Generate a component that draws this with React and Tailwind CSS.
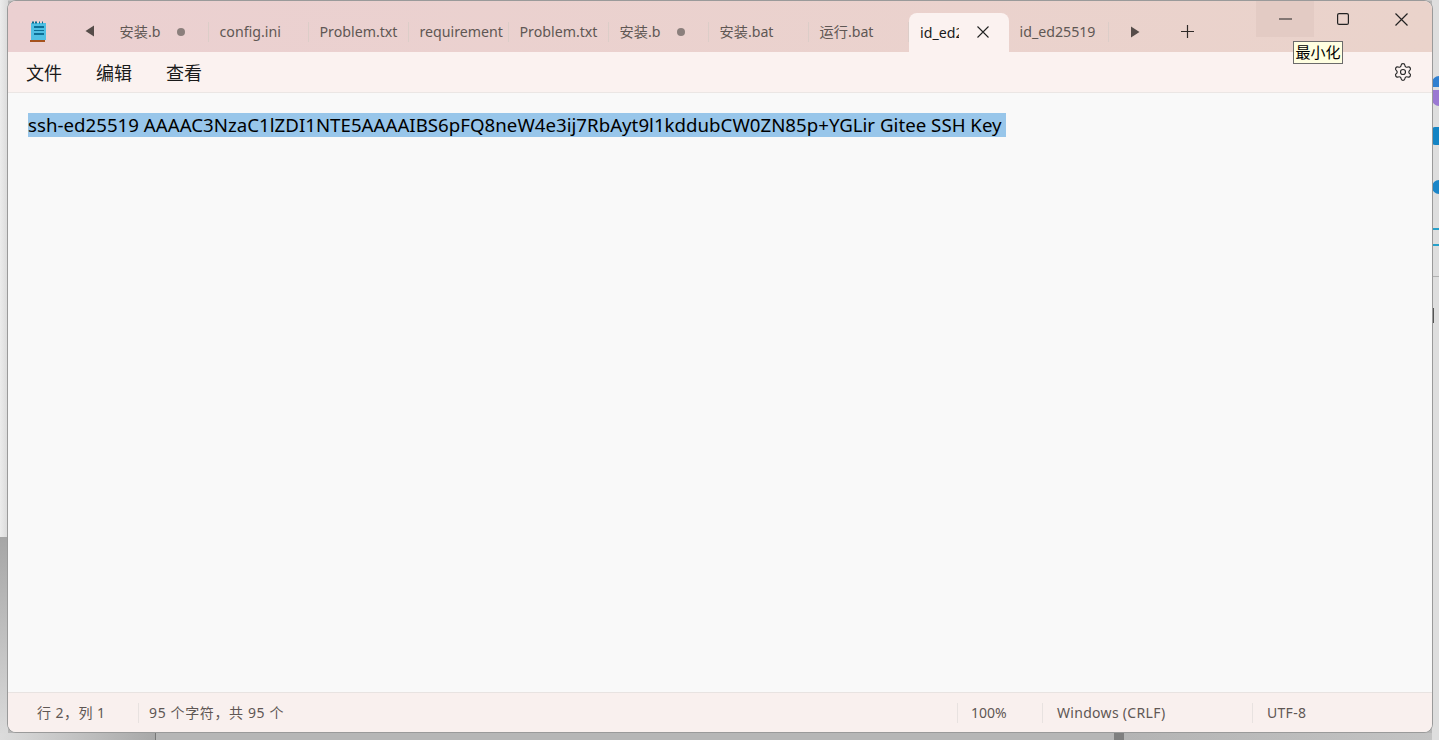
import React from 'react';
import { Settings } from 'lucide-react';

const FONT = '"Noto Sans", "Noto Sans CJK SC", sans-serif';

const tabs = [
  { name: '安装.b', dot: true },
  { name: 'config.ini' },
  { name: 'Problem.txt' },
  { name: 'requirement' },
  { name: 'Problem.txt' },
  { name: '安装.b', dot: true },
  { name: '安装.bat' },
  { name: '运行.bat' },
];

const Triangle = ({ dir }) => (
  <svg width="10" height="12" viewBox="0 0 10 12" className="text-[#554c49]">
    <path d={dir === 'left' ? 'M9 0.5v11L0.5 6z' : 'M1 0.5v11L9.5 6z'} fill="currentColor" />
  </svg>
);

const Cross = ({ size = 13, stroke = 1.2 }) => (
  <svg width={size} height={size} viewBox={`0 0 ${size} ${size}`} className="text-[#222]">
    <path d={`M0.5 0.5L${size - 0.5} ${size - 0.5}M${size - 0.5} 0.5L0.5 ${size - 0.5}`} stroke="currentColor" strokeWidth={stroke} fill="none" />
  </svg>
);

const NotepadIcon = () => (
  <svg width="18" height="22" viewBox="0 0 18 22">
    <rect x="2" y="2" width="15" height="17" fill="#4fbfe3" />
    <rect x="3" y="0.5" width="2" height="2" fill="#0b6b8f" />
    <rect x="6" y="0.5" width="2" height="2" fill="#0b6b8f" />
    <rect x="10" y="0.5" width="1" height="2" fill="#0b6b8f" />
    <rect x="13" y="0.5" width="1" height="2" fill="#0b6b8f" />
    <rect x="5" y="5" width="10" height="2" fill="#0d6f96" />
    <rect x="5" y="9" width="10" height="1" fill="#0d6f96" />
    <rect x="5" y="12" width="10" height="2" fill="#0d6f96" />
    <rect x="1" y="19" width="15" height="2" fill="#a5521d" />
  </svg>
);

const Tab = ({ name, dot }) => (
  <div className="w-[100px] h-[40px] shrink-0 flex items-center pb-[1px]">
    <div className="w-full h-[20px] flex items-center pl-[10.5px] border-r border-[#dccdc8] text-[14.2px] text-[#5f5754]">
      <span className="whitespace-nowrap">{name}</span>
      {dot && <span className="ml-[16.5px] w-[8px] h-[8px] rounded-full bg-[#8b7f7c]" />}
    </div>
  </div>
);

const StatusCell = ({ className, children }) => (
  <div className={`h-[20px] flex items-center border-l border-[#e8e2e0] ${className}`}>{children}</div>
);

export default function App() {
  return (
    <div
      className="relative w-[1439px] h-[740px] overflow-hidden bg-[#b6b6b6]"
      style={{ fontFamily: FONT }}
    >
      {/* desktop bits showing round the window */}
      <div className="absolute left-0 top-0 w-[1439px] h-[1px] bg-[#c8c8c8]" />
      <div className="absolute left-[989px] top-0 w-[78px] h-[1px] bg-[#333]" />
      <div className="absolute left-0 top-0 w-[8px] h-[537px] bg-gradient-to-r from-[#ececec] to-[#dadada]" />
      <div className="absolute left-0 top-[537px] w-[8px] h-[203px] bg-gradient-to-b from-[#a6a6a6] to-[#dcdcdc]" />
      <div className="absolute left-0 top-[733px] w-[156px] h-[7px] bg-gradient-to-r from-[#dcdcdc] to-[#a8a8a8] border-r border-[#777]" />
      <div className="absolute left-[1114px] top-[733px] w-[10px] h-[7px] bg-[#7f7f7f]" />
      <div className="absolute left-[1124px] top-[733px] w-[315px] h-[7px] bg-gradient-to-r from-[#b4b4b4] to-[#c4c4c4]" />
      <div className="absolute left-[1432px] top-0 w-[7px] h-[740px] bg-[#dedede]" />
      <div className="absolute left-[1432px] top-[76px] w-[7px] h-[11px] rounded-tl-full bg-[#2f7fd0]" />
      <div className="absolute left-[1432px] top-[90px] w-[7px] h-[16px] rounded-bl-full bg-[#9a78d2]" />
      <div className="absolute left-[1432px] top-[127px] w-[7px] h-[18px] rounded-l-[3px] bg-[#1484c4]" />
      <div className="absolute left-[1432px] top-[180px] w-[7px] h-[14px] rounded-l-full bg-[#1c86c8]" />
      <div className="absolute left-[1432px] top-[228px] w-[7px] h-[18px] border-y-2 border-[#27a0c9]" />
      <div className="absolute left-[1432px] top-[276px] w-[7px] h-[1px] bg-[#b0b0b0]" />
      <div className="absolute left-[1433px] top-[308px] w-[1px] h-[15px] bg-[#555]" />

      {/* window */}
      <div className="relative ml-[8px] mt-[1px] w-[1424px] h-[731px] rounded-[8px] overflow-hidden flex flex-col shadow-[0_0_0_1px_#9a9a9a] bg-[#f9f9f9] text-[#1a1a1a]">
        {/* title bar */}
        <div className="relative h-[51px] shrink-0 flex items-end bg-gradient-to-r from-[#ebd0d1] to-[#ead3cb]">
          <div className="w-[62px] h-[40px] flex items-center pl-[21px]">
            <NotepadIcon />
          </div>
          <div className="w-[39px] h-[40px] flex items-center justify-center pb-[2px] pl-[1px]">
            <Triangle dir="left" />
          </div>
          {tabs.map((t, i) => (
            <Tab key={i} name={t.name} dot={t.dot} />
          ))}
          <div className="w-[100px] h-[39px] shrink-0 flex items-center rounded-t-[8px] bg-[#fbf2f0] pl-[11px] pr-[20px] text-[14.2px] text-[#1a1a1a]">
            <span className="w-[39px] overflow-hidden whitespace-nowrap">id_ed25519</span>
            <span className="ml-auto pb-[2px]"><Cross size={12} stroke={1.1} /></span>
          </div>
          <Tab name="id_ed25519" />
          <div className="w-[52px] h-[40px] flex items-center justify-center pb-[1px]">
            <Triangle dir="right" />
          </div>
          <div className="w-[53px] h-[40px] flex items-center justify-center pb-[1px]">
            <svg width="13" height="13" viewBox="0 0 13 13" className="text-[#2f2a28]">
              <path d="M6.5 0v13M0 6.5h13" stroke="currentColor" strokeWidth="1.2" />
            </svg>
          </div>
          <div className="ml-auto self-start flex pr-[2px]">
            <div className="w-[58px] h-[36px] flex items-center justify-center bg-[#e3cbc4]">
              <svg width="13" height="2" viewBox="0 0 13 2">
                <path d="M0 1h13" stroke="#222" strokeWidth="1.1" />
              </svg>
            </div>
            <div className="w-[58px] h-[36px] flex items-center justify-center">
              <svg width="12" height="12" viewBox="0 0 12 12">
                <rect x="0.6" y="0.6" width="10.8" height="10.8" rx="1.5" fill="none" stroke="#222" strokeWidth="1.2" />
              </svg>
            </div>
            <div className="w-[58px] h-[36px] flex items-center justify-center">
              <Cross size={13} stroke={1.2} />
            </div>
          </div>
        </div>

        {/* menu bar */}
        <div className="h-[41px] shrink-0 flex items-center bg-[#fbf2f0] border-b border-[#ebe6e4] pl-[18px] pr-[19px] pt-[2px] text-[18px] text-[#1a1a1a]">
          <span className="w-[70px]">文件</span>
          <span className="w-[70px]">编辑</span>
          <span>查看</span>
          <Settings size={20} strokeWidth={1.4} className="ml-auto -mt-[3px] text-[#2b2b2b]" />
        </div>

        {/* editor */}
        <div className="flex-1 pt-[20px] pl-[20px]">
          <div className="w-fit h-[24px] pr-[4px] flex items-center bg-[#98c6ea] text-[18.67px] tracking-[0.02px] text-black whitespace-nowrap">
            ssh-ed25519 AAAAC3NzaC1lZDI1NTE5AAAAIBS6pFQ8neW4e3ij7RbAyt9l1kddubCW0ZN85p+YGLir Gitee SSH Key
          </div>
        </div>

        {/* status bar */}
        <div className="h-[40px] shrink-0 flex items-center bg-[#f9f0ee] border-t border-[#e8e3e1] text-[14px] tracking-[0.3px] text-[#5f5754]">
          <div className="w-[130px] pl-[29px] tracking-[0.45px]">行 2，列 1</div>
          <StatusCell className="w-[819px] pl-[10px] tracking-[0.62px]">95 个字符，共 95 个</StatusCell>
          <StatusCell className="w-[85px] pl-[13px] tracking-normal">100%</StatusCell>
          <StatusCell className="w-[210px] pl-[14px]">Windows (CRLF)</StatusCell>
          <StatusCell className="pl-[14px]">UTF-8</StatusCell>
        </div>

        {/* tooltip */}
        <div className="absolute left-[1285px] top-[40px] w-[50px] h-[23px] flex items-center justify-center bg-[#ffffe1] border border-[#6b6b6b] text-[15px] text-black">
          最小化
        </div>
      </div>
    </div>
  );
}
